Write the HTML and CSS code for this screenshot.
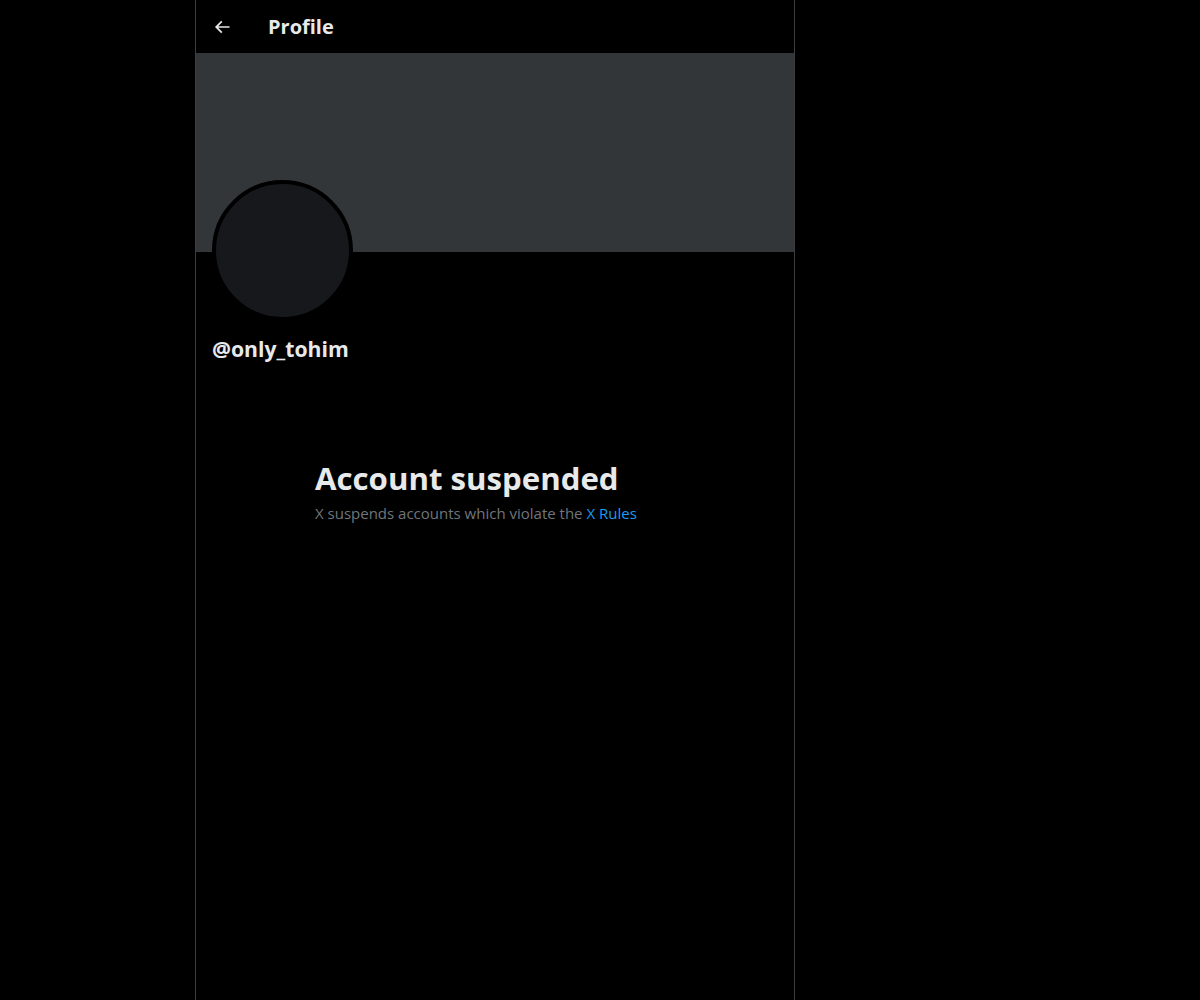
FILE: index.html
```html
<!DOCTYPE html>
<html lang="en">
<head>
<meta charset="utf-8">
<title>Profile</title>
<link rel="stylesheet" href="styles.css">
</head>
<body>
<main class="column">
  <header class="topbar">
    <div class="back">
      <svg viewBox="0 0 24 24" width="20" height="20" aria-hidden="true"><path fill="currentColor" d="M7.414 13l5.043 5.04-1.414 1.42L3.586 12l7.457-7.46 1.414 1.42L7.414 11H21v2H7.414z"/></svg>
    </div>
    <h1 class="title">Profile</h1>
  </header>
  <div class="banner"></div>
  <div class="info">
    <div class="avatar"></div>
    <div class="handle">@only_tohim</div>
  </div>
  <section class="empty">
    <h2 class="empty-title">Account suspended</h2>
    <p class="empty-text">X suspends accounts which violate the <a class="link" href="#">X Rules</a></p>
  </section>
</main>
</body>
</html>
```
FILE: styles.css
```css
html, body {
  margin: 0;
  padding: 0;
  background: #000;
  height: 100%;
}
body {
  font-family: "Open Sans", "Noto Sans", sans-serif;
  color: #e7e9ea;
}
.column {
  margin-left: 195px;
  width: 598px;
  min-height: 1000px;
  border-left: 1px solid #3a3d40;
  border-right: 1px solid #3a3d40;
}
.topbar {
  height: 53px;
  display: flex;
  align-items: center;
  padding: 0 16px;
}
.back {
  width: 56px;
  display: flex;
  align-items: center;
  color: #e7e9ea;
}
.back svg {
  width: 20px;
  height: 20px;
}
.title {
  margin: 0;
  font-size: 20px;
  font-weight: 700;
  line-height: 24px;
}
.banner {
  height: 199px;
  background: #333639;
}
.info {
  padding: 0 16px;
}
.avatar {
  width: 133px;
  height: 133px;
  border: 4px solid #000;
  border-radius: 50%;
  background: #16181c;
  margin-top: -72px;
}
.handle {
  margin-top: 16px;
  font-size: 21.2px;
  font-weight: 700;
  line-height: 24px;
}
.empty {
  width: 360px;
  margin: 99px auto 0;
  padding: 0 20px;
}
.empty-title {
  margin: 0;
  font-size: 31.2px;
  font-weight: 700;
  line-height: 36px;
}
.empty-text {
  margin: 7px 0 0;
  font-size: 15px;
  line-height: 20px;
  color: #71767b;
}
.link {
  color: #1d9bf0;
  text-decoration: none;
}
```
